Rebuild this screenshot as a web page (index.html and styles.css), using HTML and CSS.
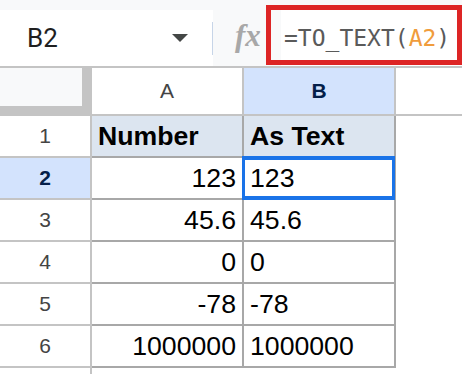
FILE: index.html
```html
<!DOCTYPE html>
<html>
<head>
<meta charset="utf-8">
<link rel="stylesheet" href="styles.css">
</head>
<body>
<div class="sheet">
  <div class="topstrip"></div>
  <div class="fbar">
    <div class="namebox">
      <span class="nb-text">B2</span>
      <svg class="caret" viewBox="0 0 16 8" width="16" height="8"><path d="M0 0H16L8 8Z" fill="#444746"/></svg>
    </div>
    <div class="divider"></div>
    <div class="fx"><span class="fx-text">fx</span></div>
    <div class="finput"><span class="f-fn">=TO_TEXT(</span><span class="f-ref">A2</span><span class="f-fn">)</span></div>
  </div>
  <div class="highlight"></div>

  <div class="hrow">
    <div class="corner"></div>
    <div class="ch">A</div>
    <div class="ch sel">B</div>
    <div class="ch rest"></div>
  </div>

  <div class="row">
    <div class="rh">1</div>
    <div class="cell head">Number</div>
    <div class="cell head">As Text</div>
    <div class="rest"></div>
  </div>
  <div class="row">
    <div class="rh sel">2</div>
    <div class="cell num">123</div>
    <div class="cell active">123<div class="selbox"></div></div>
    <div class="rest"></div>
  </div>
  <div class="row">
    <div class="rh">3</div>
    <div class="cell num">45.6</div>
    <div class="cell">45.6</div>
    <div class="rest"></div>
  </div>
  <div class="row">
    <div class="rh">4</div>
    <div class="cell num">0</div>
    <div class="cell">0</div>
    <div class="rest"></div>
  </div>
  <div class="row">
    <div class="rh">5</div>
    <div class="cell num">-78</div>
    <div class="cell">-78</div>
    <div class="rest"></div>
  </div>
  <div class="row">
    <div class="rh">6</div>
    <div class="cell num">1000000</div>
    <div class="cell">1000000</div>
    <div class="rest"></div>
  </div>
  <div class="row filler">
    <div class="rh"></div>
    <div class="rest"></div>
  </div>
</div>
</body>
</html>
```

FILE: styles.css
```css
* { box-sizing: border-box; }
html, body { margin: 0; padding: 0; background: #fff; }
.sheet {
  position: relative;
  width: 462px;
  height: 374px;
  overflow: hidden;
  background: #fff;
  font-family: "Liberation Sans", Arial, sans-serif;
}
.topstrip { height: 10px; background: #f8f9fa; }
.fbar {
  display: flex;
  height: 58px;
  border-bottom: 2px solid #c4c4c4;
}
.namebox {
  width: 212px;
  background: #fff;
  display: flex;
  align-items: center;
  padding-left: 27px;
  font-family: Roboto, "Liberation Sans", sans-serif;
  font-size: 26px;
  color: #1f1f1f;
}
.caret { margin-left: auto; margin-right: 24px; display: block; }
.divider {
  width: 1px;
  background: linear-gradient(#fff 0 12px, #c7d5e8 12px 45px, #fff 45px);
}
.fx {
  width: 68px;
  background: #f8f9fa;
  display: flex;
  align-items: center;
  padding-left: 22px;
}
.fx-text {
  font-family: "Liberation Serif", serif;
  font-style: italic;
  font-weight: bold;
  font-size: 31px;
  color: #a8a8a8;
  position: relative;
  top: -2px;
}
.finput {
  flex: 1;
  background: #fff;
  padding-left: 3px;
  font-family: "DejaVu Sans Mono", "Liberation Mono", monospace;
  font-size: 23px;
  line-height: 56px;
  white-space: nowrap;
}
.f-fn { color: #5a5a5a; }
.f-ref { color: #f09c3c; }
.highlight {
  position: absolute;
  left: 266px;
  top: 5px;
  width: 196px;
  height: 60px;
  border: 5px solid #dd2525;
}
.hrow { display: flex; height: 48px; }
.corner {
  width: 92px;
  background: #f8f9fa;
  border-right: 10px solid #c4c4c4;
  border-bottom: 10px solid #c4c4c4;
}
.ch {
  width: 152px;
  border-right: 2px solid #c4c4c4;
  border-bottom: 2px solid #c4c4c4;
  text-align: center;
  line-height: 46px;
  font-size: 21px;
  color: #444;
}
.ch.sel { background: #d3e3fd; color: #041e49; font-weight: bold; }
.ch.rest { flex: 1; border-right: 0; }
.row { display: flex; height: 42px; }
.rh {
  width: 92px;
  border-right: 2px solid #c4c4c4;
  border-bottom: 2px solid #c4c4c4;
  text-align: center;
  line-height: 40px;
  font-size: 21px;
  color: #444;
}
.rh.sel { background: #d3e3fd; color: #041e49; font-weight: bold; }
.cell {
  position: relative;
  width: 152px;
  border-right: 2px solid #a8a8a8;
  border-bottom: 2px solid #a8a8a8;
  padding: 0 6px;
  line-height: 40px;
  font-size: 26.67px;
  color: #000;
  white-space: nowrap;
}
.cell.num { text-align: right; }
.cell.head { background: #dce5f0; font-weight: bold; }
.rest { flex: 1; }
.filler .rh { border-bottom: 0; }
.selbox {
  position: absolute;
  left: -2px;
  top: -2px;
  width: 153px;
  height: 44px;
  border: 3px solid #1a73e8;
  border-top-width: 4px;
  border-bottom-width: 4px;
}
```
